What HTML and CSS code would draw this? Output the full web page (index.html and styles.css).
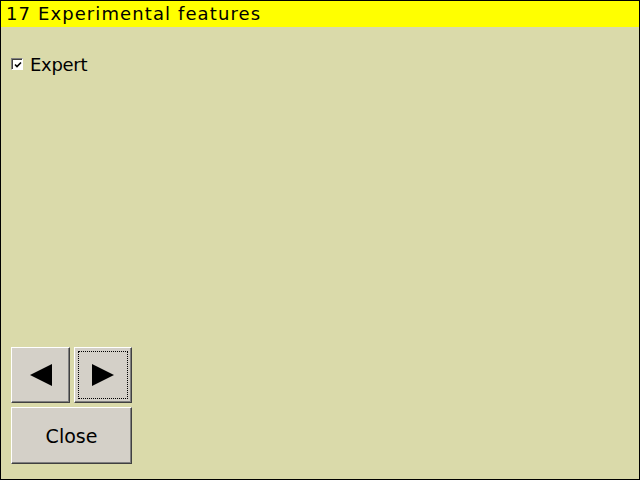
FILE: index.html
```html
<!DOCTYPE html>
<html>
<head>
<meta charset="utf-8">
<link rel="stylesheet" href="styles.css">
</head>
<body>
<div class="frame">
  <div class="title">17 Experimental features</div>
  <div class="content">
    <label class="check">
      <span class="box">
        <svg width="8" height="8" viewBox="0 0 8 8"><path d="M1 3.5 L3 5.5 L7 1.5" fill="none" stroke="#000" stroke-width="1.6"/></svg>
      </span>
      <span class="label">Expert</span>
    </label>
  </div>
  <div class="buttons">
    <div class="row">
      <div class="btn arrow">
        <svg width="22" height="22" viewBox="0 0 22 22"><polygon points="0,11 22,0 22,22" fill="#000"/></svg>
      </div>
      <div class="btn arrow wide focus">
        <div class="focusring">
          <svg width="22" height="22" viewBox="0 0 22 22"><polygon points="0,0 22,11 0,22" fill="#000"/></svg>
        </div>
      </div>
    </div>
    <div class="btn close">Close</div>
  </div>
</div>
</body>
</html>
```
FILE: styles.css
```css
html, body {
  margin: 0;
  padding: 0;
}
body {
  width: 640px;
  height: 480px;
  font-family: "DejaVu Sans", sans-serif;
}
.frame {
  box-sizing: border-box;
  width: 640px;
  height: 480px;
  border: 1px solid #000;
  background: #dadaaa;
  display: flex;
  flex-direction: column;
}
.title {
  height: 26px;
  background: #ffff00;
  font-size: 18px;
  letter-spacing: 1.1px;
  line-height: 26px;
  padding-left: 5px;
  color: #000;
  white-space: nowrap;
}
.content {
  flex: 1;
  padding: 30px 0 0 10px;
}
.check {
  display: flex;
  align-items: center;
  gap: 7px;
  height: 14px;
}
.box {
  box-sizing: border-box;
  width: 12px;
  height: 12px;
  background: #fff;
  border-top: 1px solid #808080;
  border-left: 1px solid #808080;
  border-right: 1px solid #fff;
  border-bottom: 1px solid #fff;
  box-shadow: inset 1px 1px 0 #404040;
  display: flex;
  align-items: center;
  justify-content: center;
  padding: 1px 0 0 1px;
}
.box svg {
  display: block;
}
.label {
  font-size: 18px;
  letter-spacing: -0.3px;
  color: #000;
  line-height: 14px;
  position: relative;
  top: 1px;
}
.buttons {
  padding: 0 0 15px 10px;
  display: flex;
  flex-direction: column;
  gap: 4px;
}
.row {
  display: flex;
  gap: 4px;
}
.btn {
  box-sizing: border-box;
  background: #d4d0c8;
  border-top: 1px solid #fff;
  border-left: 1px solid #fff;
  border-right: 1px solid #404040;
  border-bottom: 1px solid #404040;
  box-shadow: inset -1px -1px 0 #808080;
  display: flex;
  align-items: center;
  justify-content: center;
}
.arrow {
  width: 59px;
  height: 56px;
}
.arrow.wide {
  width: 58px;
}
.focusring {
  box-sizing: border-box;
  width: 50px;
  height: 48px;
  border: 1px dotted #000;
  display: flex;
  align-items: center;
  justify-content: center;
  margin: 0 1px 1px 0;
}
.arrow svg {
  display: block;
}
.close {
  width: 121px;
  height: 57px;
  font-size: 19px;
  color: #000;
}
```
